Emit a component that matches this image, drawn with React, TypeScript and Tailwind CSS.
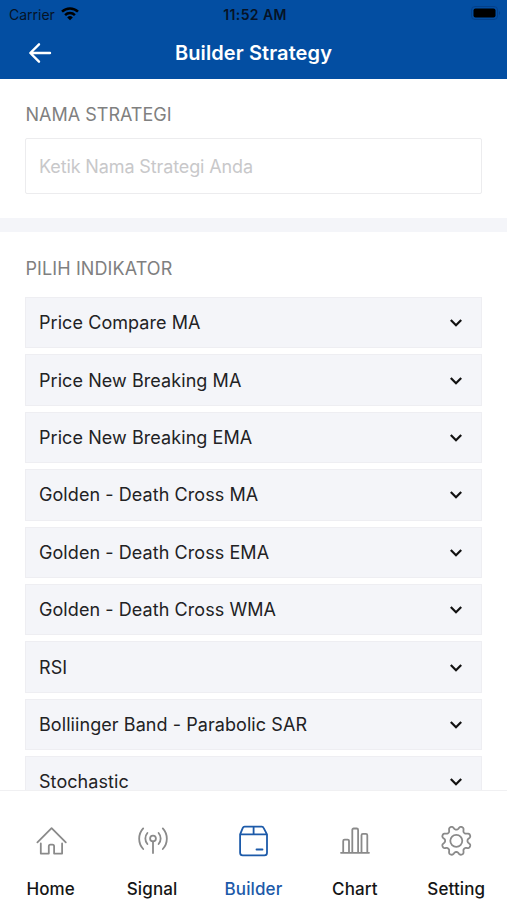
import type { ReactNode } from 'react';

const indicators = [
  'Price Compare MA',
  'Price New Breaking MA',
  'Price New Breaking EMA',
  'Golden - Death Cross MA',
  'Golden - Death Cross EMA',
  'Golden - Death Cross WMA',
  'RSI',
  'Bolliinger Band - Parabolic SAR',
  'Stochastic',
];

function TabIcon({ children }: { children: ReactNode }) {
  return (
    <svg
      width="34"
      height="34"
      viewBox="0 0 34 34"
      fill="none"
      stroke="currentColor"
      strokeWidth="1.8"
      strokeLinecap="round"
      strokeLinejoin="round"
    >
      {children}
    </svg>
  );
}

// Eight rounded teeth around the hub
const gearPath = (() => {
  const points: string[] = [];
  for (let i = 0; i < 160; i++) {
    const a = (i / 160) * Math.PI * 2;
    const r = 13 + 2 * Math.tanh(-1.5 * Math.cos(8 * a));
    points.push(`${(17.3 + r * Math.sin(a)).toFixed(2)} ${(16.8 - r * Math.cos(a)).toFixed(2)}`);
  }
  return `M${points.join('L')}Z`;
})();

const tabs = [
  {
    label: 'Home',
    icon: (
      <TabIcon>
        <path d="M3.4 18.3 17.6 4.2 31.8 18.3" />
        <path d="M6.8 19.5v10.1h8v-7.3a1.6 1.6 0 0 1 1.6-1.6h2.1a1.6 1.6 0 0 1 1.6 1.6v7.3h8V19.5" />
      </TabIcon>
    ),
  },
  {
    label: 'Signal',
    icon: (
      <TabIcon>
        <circle cx="18" cy="14.5" r="2.9" />
        <path d="M18 17.5v11.6M12.4 9a8.4 8.4 0 0 0 0 11M23.6 9a8.4 8.4 0 0 1 0 11M8.2 4.4a15.2 15.2 0 0 0 0 20.6M27.8 4.4a15.2 15.2 0 0 1 0 20.6" />
      </TabIcon>
    ),
  },
  {
    label: 'Builder',
    icon: (
      <TabIcon>
        <path d="M4.1 10.4 6.8 3.8a2 2 0 0 1 1.8-1.2h17.2a2 2 0 0 1 1.8 1.2l3.4 6.6v18.4a2.6 2.6 0 0 1-2.6 2.6H6.7a2.6 2.6 0 0 1-2.6-2.6zM4.1 10.4h26.9M17.6 2.6v7.8M20.5 25.5h6" />
      </TabIcon>
    ),
  },
  {
    label: 'Chart',
    icon: (
      <TabIcon>
        <path d="M3 28.8h28M5.2 28.5V17a1.4 1.4 0 0 1 1.4-1.4h3a1.4 1.4 0 0 1 1.4 1.4v11.5M14.3 28.5V5.9a1.4 1.4 0 0 1 1.4-1.4h3a1.4 1.4 0 0 1 1.4 1.4v22.6M23.5 28.5V11.3a1.4 1.4 0 0 1 1.4-1.4h3a1.4 1.4 0 0 1 1.4 1.4v17.2" />
      </TabIcon>
    ),
  },
  {
    label: 'Setting',
    icon: (
      <TabIcon>
        <path d={gearPath} />
        <circle cx="17.3" cy="16.8" r="6" />
      </TabIcon>
    ),
  },
];

function StatusBar() {
  return (
    <div className="grid h-[28px] grid-cols-3 items-center pl-[9px] pr-[6px] text-[14px] text-[#061326]">
      <div className="flex items-center gap-[6px]">
        <span>Carrier</span>
        <svg width="18" height="14" viewBox="0 0 18 14" fill="none" stroke="black" strokeWidth="2.5">
          <path d="M1 4.7a11.5 11.5 0 0 1 16 0M4.1 8.1a7 7 0 0 1 9.8 0" />
          <path d="M9 13.2 6.2 10.4a4 4 0 0 1 5.6 0z" fill="black" stroke="none" />
        </svg>
      </div>
      <span className="text-center font-semibold tracking-[0.4px]">11:52 AM</span>
      <svg className="relative -top-px justify-self-end" width="30" height="14" viewBox="0 0 30 14">
        <rect x="0.5" y="0.5" width="26" height="13" rx="3.5" fill="none" stroke="#04408a" />
        <rect x="2.5" y="2.5" width="22" height="9" rx="2" fill="black" />
        <path d="M28 5v4a2.4 2.4 0 0 0 0-4" fill="#04408a" />
      </svg>
    </div>
  );
}

export default function App() {
  return (
    <div className="flex h-[900px] w-[507px] flex-col overflow-hidden bg-white font-['Inter','Liberation_Sans',sans-serif]">
      <header className="h-[79px] shrink-0 bg-[#034ea2]">
        <StatusBar />
        <div className="grid h-[49px] grid-cols-[80px_1fr_80px] items-center text-white">
          <button className="pl-[28px]" aria-label="Kembali">
            <svg width="24" height="22" viewBox="0 0 24 22" fill="none" stroke="currentColor" strokeWidth="2.4" strokeLinecap="round" strokeLinejoin="round">
              <path d="M22 11H2.5M11 2.3 2.3 11l8.7 8.7" />
            </svg>
          </button>
          <h1 className="text-center text-[20px] font-semibold tracking-[0.1px]">Builder Strategy</h1>
        </div>
      </header>

      <main className="min-h-0 flex-1 overflow-hidden">
        <section className="h-[139px] px-[25px] pt-[24px]">
          <h2 className="pl-[0.5px] text-[18px] leading-[24px] text-[#808080]">NAMA STRATEGI</h2>
          <input
            className="mt-[11px] block h-[56px] w-full rounded-[2px] border border-[#ececee] px-[13px] text-[18px] tracking-[-0.12px] outline-none placeholder:text-[#c8c8ca]"
            placeholder="Ketik Nama Strategi Anda"
          />
        </section>
        <div className="h-[14px] bg-[#f4f5f9]" />
        <section className="px-[25px] pt-[25px]">
          <h2 className="pl-[0.5px] text-[18px] leading-[24px] tracking-[0.1px] text-[#808080]">PILIH INDIKATOR</h2>
          <div className="mt-[16px] flex flex-col gap-[6px]">
            {indicators.map((name) => (
              <div
                key={name}
                className="flex h-[51.4px] shrink-0 items-center justify-between border border-[#eeeef2] bg-[#f4f5f9] pl-[13px] pr-[18px] text-[18px] tracking-[0.07px] text-[#222224]"
              >
                <span>{name}</span>
                <svg width="14" height="9" viewBox="0 0 14 9" fill="none" stroke="#111" strokeWidth="2.2">
                  <path d="m1.8 2 5.2 5.2L12.2 2" />
                </svg>
              </div>
            ))}
          </div>
        </section>
      </main>

      <nav className="grid h-[110px] shrink-0 grid-cols-5 border-t border-[#f0f0f2] bg-white">
        {tabs.map(({ label, icon }) => (
          <button key={label} className="flex flex-col items-center justify-start pt-[33px]">
            <span className={`h-[34px] ${label === 'Builder' ? 'text-[#1c5aa9]' : 'text-[#8a8a8a]'}`}>{icon}</span>
            <span
              className={`mt-[20px] text-[17px] leading-[22px] font-medium tracking-[0.12px] ${
                label === 'Builder' ? 'text-[#1c5aa9]' : 'text-[#151515]'
              }`}
            >
              {label}
            </span>
          </button>
        ))}
      </nav>
    </div>
  );
}
